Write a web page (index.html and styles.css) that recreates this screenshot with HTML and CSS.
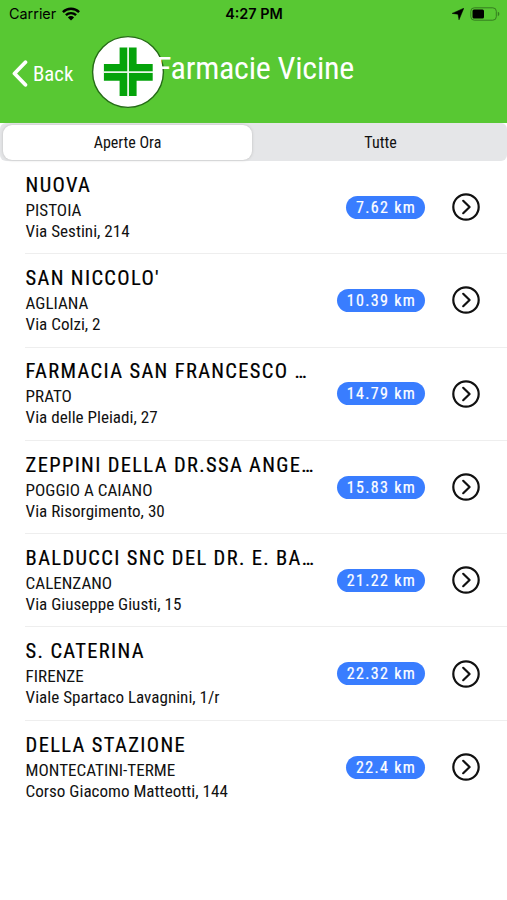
FILE: index.html
```html
<!DOCTYPE html>
<html lang="it">
<head>
<meta charset="utf-8">
<title>Farmacie Vicine</title>
<link rel="stylesheet" href="styles.css">
</head>
<body>
<svg class="defs" aria-hidden="true"><symbol id="go" viewBox="0 0 28 28"><circle cx="14" cy="14" r="12.7"/><path d="M11.2 7.8 17.6 14l-6.4 6.2"/></symbol></svg>
<header class="header">
  <div class="status">
    <div class="carrier"><span>Carrier</span>
      <svg width="18" height="14" viewBox="0 0 18 14"><g fill="none" stroke="#000" stroke-width="2.4"><path d="M.9 5.1a11.5 11.5 0 0 1 16.2 0"/><path d="M3.9 8.2a7.3 7.3 0 0 1 10.2 0"/></g><path d="M9 13.6 5.9 10.4a4.4 4.4 0 0 1 6.2 0z"/></svg>
    </div>
    <div class="clock">4:27 PM</div>
    <div class="power">
      <svg width="12" height="12" viewBox="0 0 12 12"><path d="M11.8.2 7 11.8 6 6.2.1 5.4z" stroke="#000" stroke-width=".5" stroke-linejoin="round"/></svg>
      <svg width="30" height="14" viewBox="0 0 30 14"><rect x=".8" y=".8" width="25.5" height="12.4" rx="3.5" fill="none" stroke="#357d20"/><rect x="2.5" y="2.5" width="11.5" height="9" rx="1.5"/><path d="M27.8 4.8q1.6.6 1.6 2.2t-1.6 2.2z" fill="#357d20"/></svg>
    </div>
  </div>
  <nav class="nav">
    <a class="back"><svg width="16" height="27" viewBox="0 0 16 27"><path d="M13.4 2.2 2.5 13.5l10.9 11.3" fill="none" stroke="#fff" stroke-width="3.8" stroke-linecap="round" stroke-linejoin="round"/></svg><span>Back</span></a>
    <svg class="logo" width="74" height="74" viewBox="0 0 74 74"><circle cx="37" cy="37" r="35.4" fill="#fff" stroke="#256b17" stroke-width="1.4"/><path d="M28.6 12.6h17v16.3h16.1v16.8H45.6V61h-17V45.7H12.9V28.9h15.7z" fill="#05a30b"/><path d="M37.1 12v50M12 37.2h50" stroke="#e9f7e9" stroke-width="1.8"/></svg>
    <h1>Farmacie Vicine</h1>
  </nav>
</header>
<div class="tabs"><div class="tab active"><span>Aperte Ora</span></div><div class="tab"><span>Tutte</span></div></div>
<main class="list">
  <article class="row"><div class="info"><h2>NUOVA</h2><p>PISTOIA</p><p>Via Sestini, 214</p></div><span class="badge">7.62 km</span><svg class="go"><use href="#go"/></svg></article>
  <article class="row"><div class="info"><h2>SAN NICCOLO'</h2><p>AGLIANA</p><p>Via Colzi, 2</p></div><span class="badge">10.39 km</span><svg class="go"><use href="#go"/></svg></article>
  <article class="row"><div class="info"><h2>FARMACIA SAN FRANCESCO …</h2><p>PRATO</p><p>Via delle Pleiadi, 27</p></div><span class="badge">14.79 km</span><svg class="go"><use href="#go"/></svg></article>
  <article class="row"><div class="info"><h2>ZEPPINI DELLA DR.SSA ANGE…</h2><p>POGGIO A CAIANO</p><p>Via Risorgimento, 30</p></div><span class="badge">15.83 km</span><svg class="go"><use href="#go"/></svg></article>
  <article class="row"><div class="info"><h2>BALDUCCI SNC DEL DR. E. BA…</h2><p>CALENZANO</p><p>Via Giuseppe Giusti, 15</p></div><span class="badge">21.22 km</span><svg class="go"><use href="#go"/></svg></article>
  <article class="row"><div class="info"><h2>S. CATERINA</h2><p>FIRENZE</p><p>Viale Spartaco Lavagnini, 1/r</p></div><span class="badge">22.32 km</span><svg class="go"><use href="#go"/></svg></article>
  <article class="row"><div class="info"><h2>DELLA STAZIONE</h2><p>MONTECATINI-TERME</p><p>Corso Giacomo Matteotti, 144</p></div><span class="badge">22.4 km</span><svg class="go"><use href="#go"/></svg></article>
</main>
</body>
</html>
```
FILE: styles.css
```css
* { box-sizing: border-box; }
body { margin: 0; height: 900px; overflow: hidden; background: #fff; color: #111; font-family: "Roboto Condensed", Roboto, sans-serif; font-stretch: 75%; }
h1, h2, p { margin: 0; font-weight: 400; white-space: nowrap; }
svg { display: block; flex: none; }
.defs { width: 0; height: 0; position: absolute; }
.header { height: 123px; background: #58c833; }
.status { height: 27px; display: grid; grid-template-columns: 1fr auto 1fr; align-items: center; padding: 0 7px 0 9px; font-family: Inter, sans-serif; font-stretch: 100%; font-size: 14.4px; color: #000; }
.carrier, .power { display: flex; align-items: center; gap: 6px; }
.power { justify-content: flex-end; }
.clock { font-weight: 600; margin-left: -1px; }
.nav { height: 90px; display: flex; align-items: center; color: #fff; }
.back { display: flex; align-items: center; gap: 5px; width: 91px; padding: 3px 0 0 12px; font-size: 20.8px; }
.logo { margin-right: -9px; }
h1 { font-size: 32px; line-height: 38px; margin-top: -8px; letter-spacing: -.25px; }
.tabs { display: flex; height: 38px; background: #e5e6e8; border-radius: 6px; padding: 2px 0 1px 3px; font-size: 16px; color: #111; }
.tab { flex: 1; display: flex; align-items: center; justify-content: center; }
.tab:last-child { padding-left: 2px; }
.active { flex: none; width: 249px; background: #fff; border-radius: 9px; box-shadow: 0 0 3px #bbb; }
.row { height: 93.3px; margin-left: 25px; display: flex; align-items: center; border-bottom: 1.5px solid #eee; }
.row:last-child { border: 0; }
.info { flex: 1; min-width: 0; height: 93px; padding: 12px 0 0 .6px; }
h2 { font-size: 20.5px; line-height: 24px; letter-spacing: 1.35px; font-weight: 400; color: #000; -webkit-text-stroke: .2px #000; }
.info p { font-size: 17.1px; line-height: 21px; position: relative; top: 3px; }
.badge { height: 23px; line-height: 23px; padding: 0 9px 0 10px; border-radius: 12px; background: #397dff; color: #fff; font-size: 16px; letter-spacing: 1.3px; font-weight: 400; -webkit-text-stroke: .2px #fff; }
.go { width: 28px; height: 28px; margin: 0 27px; fill: none; stroke: #111; stroke-width: 2.2; stroke-linecap: round; stroke-linejoin: round; }
```
